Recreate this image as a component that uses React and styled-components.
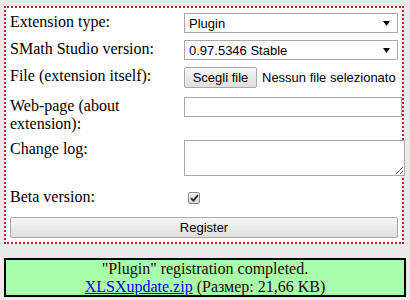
import styled, { createGlobalStyle } from 'styled-components';

const GlobalStyle = createGlobalStyle`
  html, body {
    margin: 0;
    padding: 0;
    background: #ebebeb;
  }
  body {
    font-family: "Liberation Serif", "Times New Roman", serif;
    font-size: 16px;
    color: #000;
  }
`;

const Page = styled.div`
  padding: 6px 0 0 4px;
  width: 402px;
  font-family: "Liberation Serif", "Times New Roman", serif;
`;

const FormBox = styled.form`
  width: 388px;
  margin: 0;
  padding: 5px 4px 4px 4px;
  border: 2px dotted #b02a2a;
  background: #fff;
`;

const Grid = styled.div`
  display: grid;
  grid-template-columns: 174px 214px;
  grid-template-rows: 27px 27px 30px 43px 48px 29px 21px;
`;

const Label = styled.div`
  font: 16px/1.107 "Liberation Serif", "Times New Roman", serif;
  padding-right: 4px;
`;

const Field = styled.div`
  display: flex;
  align-items: flex-start;
  min-width: 0;
`;

const SelectBox = styled.div`
  box-sizing: border-box;
  width: 214px;
  height: 20px;
  display: flex;
  align-items: center;
  justify-content: space-between;
  padding: 0 7px 0 4px;
  border: 1px solid #a9a9a9;
  background: #fff;
  font: 13px "Liberation Sans", Arial, sans-serif;
  color: #000;
`;

const Arrow = styled.svg`
  width: 7px;
  height: 5px;
  display: block;
`;

const Button = styled.button`
  box-sizing: border-box;
  height: 21px;
  width: ${(p) => p.$width || 'auto'};
  padding: 0 6px;
  border: 1px solid #a9a9a9;
  border-radius: 2px;
  background: linear-gradient(#f7f7f7, #dedede);
  font: 13px "Liberation Sans", Arial, sans-serif;
  color: #000;
  cursor: pointer;
`;

const FileNote = styled.span`
  margin-left: 5px;
  font: 13px/21px "Liberation Sans", Arial, sans-serif;
  color: #000;
  white-space: nowrap;
`;

const TextInput = styled.input`
  box-sizing: border-box;
  width: 218px;
  height: 20px;
  margin: 0;
  border: 1px solid #a9a9a9;
  background: #fff;
  flex-shrink: 0;
`;

const TextArea = styled.textarea`
  box-sizing: border-box;
  width: 221px;
  height: 36px;
  margin: 0;
  border: 1px solid #a9a9a9;
  background: #fff;
  flex-shrink: 0;
`;

const Check = styled.span`
  box-sizing: border-box;
  width: 12px;
  height: 12px;
  margin: 4px 0 0 4px;
  display: flex;
  align-items: center;
  justify-content: center;
  border: 1px solid #8e8e8e;
  border-radius: 2px;
  background: linear-gradient(#f0f0f0, #d6d6d6);
`;

const WideCell = styled.div`
  grid-column: 1 / 3;
`;

const Notice = styled.div`
  margin-top: 14px;
  border: 2px solid #000;
  background: #aaffaa;
  text-align: center;
  font: 16px/1.107 "Liberation Serif", "Times New Roman", serif;
  color: #1a0800;
`;

const Link = styled.a`
  color: #0000ee;
  text-decoration: underline;
`;

const Select = ({ value }) => (
  <SelectBox>
    <span>{value}</span>
    <Arrow viewBox="0 0 7 5">
      <path d="M0 0 H7 L3.5 5 Z" fill="#000" />
    </Arrow>
  </SelectBox>
);

export default function App() {
  return (
    <>
      <GlobalStyle />
      <Page>
        <FormBox onSubmit={(e) => e.preventDefault()}>
          <Grid>
            <Label>Extension type:</Label>
            <Field>
              <Select value="Plugin" />
            </Field>

            <Label>SMath Studio version:</Label>
            <Field>
              <Select value="0.97.5346 Stable" />
            </Field>

            <Label>File (extension itself):</Label>
            <Field>
              <Button type="button" $width="73px">Scegli file</Button>
              <FileNote>Nessun file selezionato</FileNote>
            </Field>

            <Label>Web-page (about extension):</Label>
            <Field>
              <TextInput type="text" />
            </Field>

            <Label>Change log:</Label>
            <Field>
              <TextArea />
            </Field>

            <Label>Beta version:</Label>
            <Field>
              <Check>
                <svg width="9" height="8" viewBox="0 0 9 8">
                  <path d="M1 4.2 L3.4 6.6 L8 1.2" stroke="#2a2a2a" strokeWidth="1.9" fill="none" />
                </svg>
              </Check>
            </Field>

            <WideCell>
              <Button type="submit" $width="100%">Register</Button>
            </WideCell>
          </Grid>
        </FormBox>

        <Notice>
          "Plugin" registration completed.
          <br />
          <Link href="#">XLSXupdate.zip</Link> (Размер: 21,66 KB)
        </Notice>
      </Page>
    </>
  );
}
